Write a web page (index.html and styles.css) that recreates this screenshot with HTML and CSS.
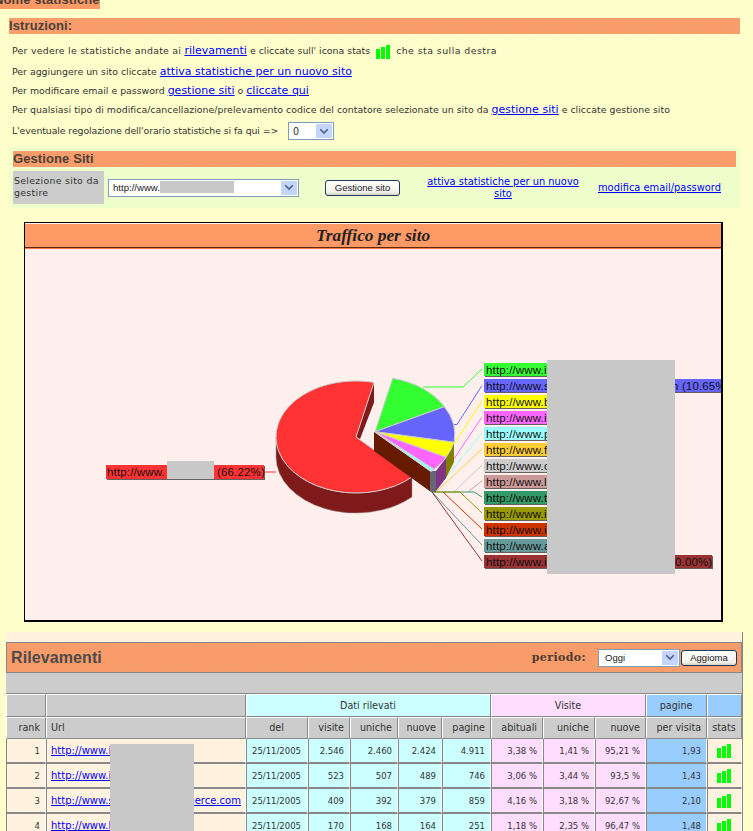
FILE: index.html
```html
<!DOCTYPE html>
<html lang="it">
<head>
<meta charset="utf-8">
<title>Nome statistiche</title>
<link rel="stylesheet" href="styles.css">
</head>
<body>
<div class="top-title"><span>Nome statistiche</span></div>

<section class="istr">
  <h2 class="bar">Istruzioni:</h2>
  <p class="line l1"><span class="sp1">Per vedere le statistiche andate ai </span><a href="#">rilevamenti</a> e cliccate sull' icona stats<svg class="bars bars-top" viewBox="0 0 14 14"><path d="M0 4h4v10H0zM5 2h4v12H5zM10 0h4v14h-4z"/></svg><span class="sp2">che sta sulla destra</span></p>
  <p class="line l2">Per aggiungere un sito cliccate <a href="#">attiva statistiche per un nuovo sito</a></p>
  <p class="line l3">Per modificare email e password <a href="#">gestione siti</a> o <a href="#">cliccate qui</a></p>
  <p class="line l3 l4">Per qualsiasi tipo di modifica/cancellazione/prelevamento codice del contatore selezionate un sito da <a href="#">gestione siti</a> e cliccate gestione sito</p>
  <div class="line l5">L'eventuale regolazione dell'orario statistiche si fa qui =&gt;
    <div class="sel sel-ora"><span>0</span><i class="arrow"><svg viewBox="0 0 16 12"><path d="M3 3l5 5 5-5" /></svg></i></div>
  </div>
</section>

<section class="gest">
  <h2 class="bar">Gestione Siti</h2>
  <div class="gest-row">
    <div class="gest-label">Selezione sito da gestire</div>
    <div class="sel sel-sito"><span>http://www.</span><b class="mask mask-sel"></b><i class="arrow"><svg viewBox="0 0 16 12"><path d="M3 3l5 5 5-5" /></svg></i></div>
    <button class="btn btn-gest">Gestione sito</button>
    <a class="gest-link1" href="#">attiva statistiche per un nuovo sito</a>
    <a class="gest-link2" href="#">modifica email/password</a>
  </div>
</section>

<section class="chart">
  <h2 class="chart-title">Traffico per sito</h2>
  <svg class="pie" viewBox="0 0 697 372" width="697" height="372">
    <g transform="translate(-25 -248)">
      <!-- leaders -->
      <g fill="none" stroke-width="1">
        <path d="M265 472h11" stroke="#f33"/>
        <path d="M423 387h40l19-18" stroke="#3f3"/>
        <path d="M454 424.500h3l25-39" stroke="#66f"/>
        <path d="M452 447l30-46" stroke="#ff0"/>
        <path d="M433 490l49-73" stroke="#f6f"/>
        <path d="M435 491l47-58" stroke="#9ff"/>
        <path d="M437 491l45-42" stroke="#fc3"/>
        <path d="M455 491l27-26" stroke="#ccc"/>
        <path d="M469 491l13-10" stroke="#c99"/>
        <path d="M432 492h42l8 5" stroke="#396"/>
        <path d="M432 492h28l22 21" stroke="#990"/>
        <path d="M443 492l39 37" stroke="#c30"/>
        <path d="M432 492l50 53" stroke="#699"/>
        <path d="M432 492l50 69" stroke="#933"/>
      </g>
      <!-- red slice -->
      <path d="M374 382.400V402.400L360 439 356 437z" fill="#7f1a1a"/>
      <path d="M276 437v20A80 56 0 0 0 412 497V477A80 56 0 0 1 276 437z" fill="#7f1a1a" stroke="#999" stroke-width=".5"/>
      <path d="M356 437L374 382.400A80 56 0 1 0 412 477z" fill="#f33" stroke="#ccc" stroke-width="1"/>
      <!-- small slice walls -->
      <path d="M374 432V451L431 492V472z" fill="#661a00"/>
      <path d="M430 471h6v21h-6z" fill="#667"/>
      <path d="M436 471l10-13v20l-10 13z" fill="#7f3380"/>
      <path d="M446 458l8-16v20l-8 16z" fill="#808000"/>
      <!-- small slices -->
      <path d="M375 431.700L392.700 378.300A80 56 0 0 1 444.300 406.700z" fill="#3f3" stroke="#ccc"/>
      <path d="M375 431.700L444.300 406.700A80 56 0 0 1 454 442.300z" fill="#66f" stroke="#ccc"/>
      <path d="M375 431.700L454 442.300A80 56 0 0 1 446 457.300z" fill="#ff0" stroke="#ccc"/>
      <path d="M375 431.700L446 457.300A80 56 0 0 1 434 469.300z" fill="#f6f" stroke="#ccc"/>
      <path d="M375 431.700L434 469.300 431 471.500z" fill="#9ff" stroke="#ccc"/>
      <!-- labels -->
      <g class="labels">
        <rect x="106" y="465" width="158" height="14" fill="#f33"/><text class="lbl" x="107" y="476">http://www.</text><text class="lbl" x="217" y="476">(66.22%)</text>
        <rect x="484" y="363" width="80" height="13" fill="#3f3"/><text class="lbl" x="486" y="374">http://www.i</text>
        <rect x="484" y="379" width="238" height="13" fill="#66f"/><text class="lbl" x="486" y="390">http://www.s</text><text class="lbl" x="672" y="390">n (10.65%)</text>
        <rect x="484" y="395" width="80" height="13" fill="#ff0"/><text class="lbl" x="486" y="406">http://www.b</text>
        <rect x="484" y="411" width="80" height="13" fill="#f6f"/><text class="lbl" x="486" y="422">http://www.i</text>
        <rect x="484" y="427" width="80" height="13" fill="#9ff"/><text class="lbl" x="486" y="438">http://www.p</text>
        <rect x="484" y="443" width="80" height="13" fill="#fc3"/><text class="lbl" x="486" y="454">http://www.f</text>
        <rect x="484" y="459" width="80" height="13" fill="#ccc"/><text class="lbl" x="486" y="470">http://www.o</text>
        <rect x="484" y="475" width="80" height="13" fill="#c99"/><text class="lbl" x="486" y="486">http://www.l</text>
        <rect x="484" y="491" width="80" height="13" fill="#396"/><text class="lbl" x="486" y="502">http://www.t</text>
        <rect x="484" y="507" width="80" height="13" fill="#990"/><text class="lbl" x="486" y="518">http://www.i</text>
        <rect x="484" y="523" width="80" height="13" fill="#c30"/><text class="lbl" x="486" y="534">http://www.i</text>
        <rect x="484" y="539" width="80" height="13" fill="#699"/><text class="lbl" x="486" y="550">http://www.a</text>
        <rect x="484" y="555" width="228" height="13" fill="#933"/><text class="lbl" x="486" y="566">http://www.i</text><text class="lbl" x="675" y="566">0.00%)</text>
      </g>
      <rect x="167" y="461" width="47" height="18" fill="#c8c8c8"/>
      <rect x="547" y="360" width="128" height="214" fill="#c8c8c8"/>
    </g>
  </svg>
</section>

<section class="ril">
  <div class="ril-head">
    <h2 class="ril-title">Rilevamenti</h2>
    <span class="periodo">periodo:</span>
    <div class="sel sel-per"><span>Oggi</span><i class="arrow"><svg viewBox="0 0 16 12"><path d="M3 3l5 5 5-5" /></svg></i></div>
    <button class="btn btn-agg">Aggioma</button>
  </div>
  <div class="ril-gray"></div>
  <table class="tab">
    <colgroup><col class="c1"><col class="c2"><col class="c3"><col class="c4"><col class="c5"><col class="c6"><col class="c7"><col class="c8"><col class="c9"><col class="c10"><col class="c11"><col class="c12"></colgroup>
    <thead>
      <tr class="h1"><th class="g"></th><th class="g"></th><th colspan="5" class="cy">Dati rilevati</th><th colspan="3" class="pk">Visite</th><th class="bl">pagine</th><th class="bl"></th></tr>
      <tr class="h2"><th class="g r">rank</th><th class="g l">Url</th><th class="g">del</th><th class="g r">visite</th><th class="g r">uniche</th><th class="g r">nuove</th><th class="g r">pagine</th><th class="g r">abituali</th><th class="g r">uniche</th><th class="g r">nuove</th><th class="g r">per visita</th><th class="g">stats</th></tr>
    </thead>
    <tbody>
      <tr><td class="cr r">1</td><td class="cr l"><a href="#">http://www.i</a></td><td class="cy">25/11/2005</td><td class="cy r">2.546</td><td class="cy r">2.460</td><td class="cy r">2.424</td><td class="cy r">4.911</td><td class="pk r">3,38 %</td><td class="pk r">1,41 %</td><td class="pk r">95,21 %</td><td class="bl r">1,93</td><td class="cr"><svg class="bars" viewBox="0 0 14 14"><path d="M0 4h4v10H0zM5 2h4v12H5zM10 0h4v14h-4z"/></svg></td></tr>
      <tr><td class="cr r">2</td><td class="cr l"><a href="#">http://www.i</a></td><td class="cy">25/11/2005</td><td class="cy r">523</td><td class="cy r">507</td><td class="cy r">489</td><td class="cy r">746</td><td class="pk r">3,06 %</td><td class="pk r">3,44 %</td><td class="pk r">93,5 %</td><td class="bl r">1,43</td><td class="cr"><svg class="bars" viewBox="0 0 14 14"><path d="M0 4h4v10H0zM5 2h4v12H5zM10 0h4v14h-4z"/></svg></td></tr>
      <tr><td class="cr r">3</td><td class="cr l"><a href="#">http://www.sitosuperlecommerce.com</a></td><td class="cy">25/11/2005</td><td class="cy r">409</td><td class="cy r">392</td><td class="cy r">379</td><td class="cy r">859</td><td class="pk r">4,16 %</td><td class="pk r">3,18 %</td><td class="pk r">92,67 %</td><td class="bl r">2,10</td><td class="cr"><svg class="bars" viewBox="0 0 14 14"><path d="M0 4h4v10H0zM5 2h4v12H5zM10 0h4v14h-4z"/></svg></td></tr>
      <tr><td class="cr r">4</td><td class="cr l"><a href="#">http://www.b</a></td><td class="cy">25/11/2005</td><td class="cy r">170</td><td class="cy r">168</td><td class="cy r">164</td><td class="cy r">251</td><td class="pk r">1,18 %</td><td class="pk r">2,35 %</td><td class="pk r">96,47 %</td><td class="bl r">1,48</td><td class="cr"><svg class="bars" viewBox="0 0 14 14"><path d="M0 4h4v10H0zM5 2h4v12H5zM10 0h4v14h-4z"/></svg></td></tr>
    </tbody>
  </table>
  <b class="mask mask-tab"></b>
</section>
</body>
</html>
```
FILE: styles.css
```css
html, body { margin: 0; padding: 0; height: 831px; overflow: hidden; }
body { background: #ffffcc; font: 9.400px/12px "DejaVu Sans", Verdana, sans-serif; color: #333; position: relative; }
a { color: #00f; text-decoration: underline; }
p, h2 { margin: 0; }

.top-title { height: 9px; width: 100px; background: #ff9966; overflow: hidden; font: bold 13px/13px "Liberation Sans", Arial, sans-serif; color: #4a4038; white-space: nowrap; letter-spacing: .1px; }
.top-title span { display: block; margin-top: -7px; margin-left: -6px; }

.bar { background-color: #ff9966; background-image: radial-gradient(circle at 1px 1px, #f2a070 0.7px, transparent 1px); background-size: 3px 3px; height: 16px; font: bold 13px/16px "Liberation Sans", Arial, sans-serif; color: #4a4038; white-space: nowrap; letter-spacing: .1px; }

.istr { margin: 9px 13px 0 9px; }
.line { padding-left: 3px; white-space: nowrap; height: 12px; }
.line a { font-size: 11px; }
.sp1 { letter-spacing: .25px; }
.sp2 { letter-spacing: .45px; }
.l1 { margin-top: 10px; height: 14px; line-height: 14px; }
.l2 { margin-top: 8px; }
.l3 { margin-top: 7px; }
.l4 { letter-spacing: .02px; }
.l5 { margin-top: 6px; height: 18px; display: flex; align-items: center; gap: 10px; letter-spacing: -.1px; }
.bars { width: 14px; height: 14px; fill: #00ff00; display: inline-block; vertical-align: middle; }
.bars-top { margin: 0 6px 0 6px; }

.sel { background: #fff; border: 1px solid #7f9db9; box-sizing: border-box; display: flex; align-items: center; color: #222; font: 10px "Liberation Sans", Arial, sans-serif; position: relative; padding-left: 4px; letter-spacing: 0; }
.sel span { flex: none; }
.arrow { position: absolute; right: 1px; top: 1px; bottom: 1px; width: 16px; background: #c3d5fb; display: flex; align-items: center; justify-content: center; border-radius: 1px; }
.arrow svg { width: 12px; height: 9px; fill: none; stroke: #4d6185; stroke-width: 2.200; }
.sel-ora { width: 46px; height: 18px; }

.gest { margin: 7px 13px 0 9px; background: #eeffcc; padding: 4px; height: 61px; box-sizing: border-box; }
.gest-row { display: flex; align-items: center; margin-top: 4px; }
.gest-label { width: 91px; height: 33px; background: #cccccc; box-sizing: border-box; padding: 4px 1px; line-height: 12px; letter-spacing: .3px; flex: none; }
.sel-sito { width: 191px; height: 18px; margin-left: 4px; flex: none; font-size: 9.600px; }
.sel-sito span { width: 47px; }
.mask { background: #c8c8c8; display: block; }
.mask-sel { width: 74px; height: 12px; margin-top: -2px; }
.btn { font: 9.500px/1 "Liberation Sans", Arial, sans-serif; color: #222; height: 16px; padding: 0; border: 1px solid #1c3a5c; border-radius: 3px; background: linear-gradient(#fff, #f2f1ea 80%, #d6d0c5); flex: none; }
.btn-gest { width: 75px; margin-left: 26px; }
.gest-link1 { width: 160px; margin-left: 23px; text-align: center; flex: none; font-size: 9.900px; }
.gest-link2 { margin-left: 15px; white-space: nowrap; flex: none; font-size: 9.900px; }

.chart { margin: 14px 0 0 24px; width: 699px; height: 400px; box-sizing: border-box; border: 1px solid #000; border-right-width: 2px; border-bottom-width: 2px; background: #fff0ee; overflow: hidden; }
.chart-title { margin: 1px 0 0; height: 24px; background: #ff9966; border-bottom: 1px solid #5a2a10; box-shadow: 0 1px 0 #ff7744; box-sizing: border-box; text-align: center; font: italic bold 17.300px/23px "Liberation Serif", serif; color: #222; }
.pie { display: block; }
.pie rect { shape-rendering: crispEdges; }
.lbl { font: 11.500px "Liberation Sans", Arial, sans-serif; fill: #111; letter-spacing: .15px; }
.labels rect { filter: drop-shadow(1px 1px 0 rgba(0, 0, 0, .6)); }

.ril { margin: 10px 0 0 6px; width: 737px; background: #fff3e0; padding-top: 10px; border-right: 1px solid #888; position: relative; height: 200px; box-sizing: border-box; }
.ril-head { height: 29px; background-color: #ff9966; background-image: radial-gradient(circle at 1px 1px, #f2a070 0.7px, transparent 1px); background-size: 3px 3px; border: 1px solid #888; display: flex; align-items: center; }
.ril-title { font: bold 16px "Liberation Sans", Arial, sans-serif; color: #4a4a4a; margin-left: 4px; flex: 1; letter-spacing: .1px; }
.periodo { font: bold 11px "DejaVu Serif", serif; color: #4a3a30; letter-spacing: .4px; }
.sel-per { width: 82px; height: 18px; margin-left: 12px; padding-left: 6px; font-size: 9.500px; }
.btn-agg { width: 56px; margin: 0 4px 0 1px; }
.ril-gray { height: 20px; background: #ccc; border-left: 1px solid #ccc; border-bottom: 1px solid #888; }

.tab { table-layout: fixed; border-collapse: separate; border-spacing: 0; width: 736px; }
.tab th, .tab td { font-weight: normal; box-sizing: border-box; padding: 0 5px 0 4px; text-align: center; border-top: 1px solid #fff; border-left: 1px solid #fff; border-right: 1px solid #888; border-bottom: 1px solid #888; color: #333; font-size: 9.600px; white-space: nowrap; }
.tab .h1 { height: 23px; }
.tab .h2 { height: 22px; }
.tab tbody tr { height: 25px; }
.tab td { font-size: 8.500px; border-top: 0; border-left: 1px solid #888; border-right: 1px solid #fff; border-bottom: 2px solid #888; }
.tab td a { font-size: 10px; }
.tab .r { text-align: right; }
.tab .l { text-align: left; }
.g { background: #ccc; }
.cy { background: #ccffff; }
.pk { background: #ffddff; }
.bl { background: #99ccff; }
.cr { background: #fff3e0; }
.c1 { width: 40px; } .c2 { width: 200px; } .c3 { width: 62px; } .c4 { width: 42px; }
.c5 { width: 48px; } .c6 { width: 44px; } .c7 { width: 49px; } .c8 { width: 52px; }
.c9 { width: 52px; } .c10 { width: 51px; } .c11 { width: 61px; } .c12 { width: 35px; }
.mask-tab { position: absolute; left: 104px; top: 112px; width: 84px; height: 88px; }
```
